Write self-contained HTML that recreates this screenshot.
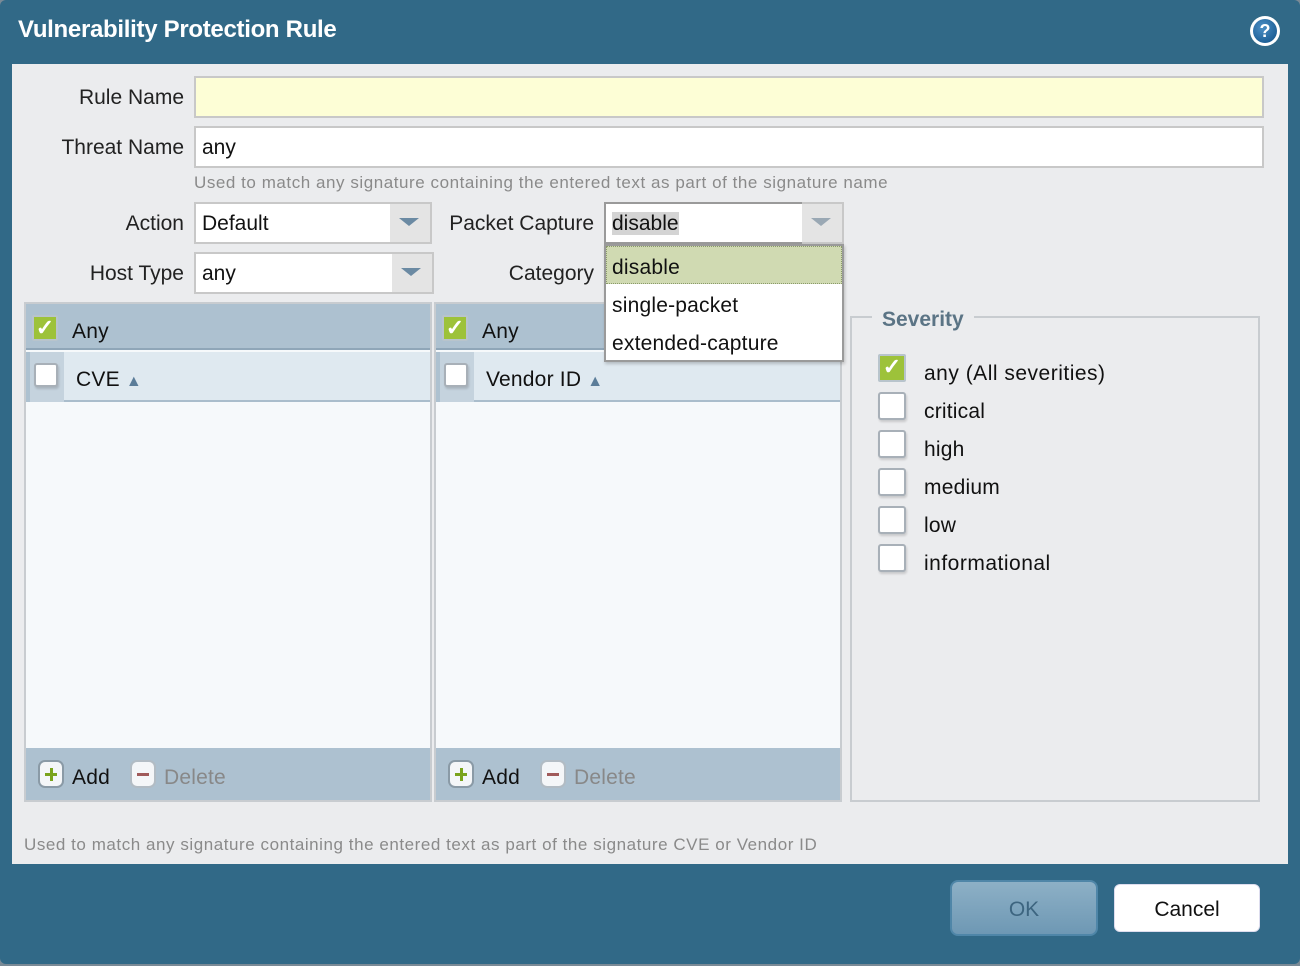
<!DOCTYPE html>
<html><head><style>
*{box-sizing:border-box;margin:0;padding:0}
body{width:1300px;height:966px;background:#7a8a96;font-family:"Liberation Sans",sans-serif;position:relative;overflow:hidden}
.a{position:absolute}
#frame{left:0;top:0;width:1300px;height:964px;background:#316987;border-radius:6px}
#title{left:18px;top:16px;color:#fff;font-weight:bold;font-size:24px;letter-spacing:-0.3px}
#panel{left:12px;top:64px;width:1276px;height:800px;background:#ebecee}
.lbl{font-size:21px;color:#222;text-align:right}
.inp{background:#fff;border:2px solid #c8c8c8;font-size:21px;color:#111;padding:8px 0 0 6px}
.dd{background:#e4e4e4;border:2px solid #c8c8c8;border-left:none}
.tri{width:0;height:0;border-left:10px solid transparent;border-right:10px solid transparent;border-top:8px solid #6b8aa3;position:absolute;left:9px;top:14px}
.help{font-size:17px;color:#8a8a8a;letter-spacing:0.55px}
.cb{width:26px;height:26px;border:2px solid #a8b0b8;border-radius:3px;background:#fff;box-shadow:1px 2px 2px rgba(0,0,0,.15)}
.cbg{width:26px;height:26px;background:#9dc23a;border:2px solid #b8c4cc;border-radius:2px;color:#fff;font-size:22px;font-weight:bold;line-height:22px;text-align:center}
.t{font-size:21px;color:#111;letter-spacing:0.2px}
.btnic{width:26px;height:28px;border:2px solid #8a9aa6;border-radius:7px;background:#f4f6f8}
</style></head><body>
<div id="frame" class="a"></div>
<div id="title" class="a">Vulnerability Protection Rule</div>
<div class="a" style="left:1250px;top:16px;width:30px;height:30px;border-radius:50%;background:#fff;"></div>
<div class="a" style="left:1253px;top:19px;width:24px;height:24px;border-radius:50%;background:radial-gradient(circle at 40% 35%,#4c8fc5,#0d4f86);color:#fff;font-weight:bold;font-size:18px;text-align:center;line-height:24px">?</div>
<div id="panel" class="a"></div>

<div class="a lbl" style="left:40px;top:86px;width:144px">Rule Name</div>
<div class="a inp" style="left:194px;top:76px;width:1070px;height:42px;background:#fdfed6"></div>
<div class="a lbl" style="left:40px;top:136px;width:144px">Threat Name</div>
<div class="a inp" style="left:194px;top:126px;width:1070px;height:42px">any</div>
<div class="a help" style="left:194px;top:173px">Used to match any signature containing the entered text as part of the signature name</div>

<div class="a lbl" style="left:40px;top:212px;width:144px">Action</div>
<div class="a inp" style="left:194px;top:202px;width:198px;height:42px">Default</div>
<div class="a dd" style="left:390px;top:202px;width:42px;height:42px"><div class="tri"></div></div>
<div class="a lbl" style="left:40px;top:262px;width:144px">Host Type</div>
<div class="a inp" style="left:194px;top:252px;width:200px;height:42px">any</div>
<div class="a dd" style="left:392px;top:252px;width:42px;height:42px"><div class="tri"></div></div>

<div class="a lbl" style="left:440px;top:212px;width:154px">Packet Capture</div>
<div class="a inp" style="left:604px;top:202px;width:200px;height:42px;border-color:#9a9a9a"><span style="background:#d4d4d4">disable</span></div>
<div class="a dd" style="left:802px;top:202px;width:42px;height:42px"><div class="tri" style="border-top-color:#9aa8b4"></div></div>
<div class="a lbl" style="left:440px;top:262px;width:154px">Category</div>

<!-- left grid -->
<div class="a" style="left:24px;top:302px;width:408px;height:500px;background:#f6f9fb;border:2px solid #c8ccd0"></div>
<div class="a" style="left:26px;top:304px;width:404px;height:46px;background:#adc1d0;border-bottom:2px solid #8fa6b8"></div>
<div class="a cbg" style="left:32px;top:315px">✓</div>
<div class="a t" style="left:72px;top:320px">Any</div>
<div class="a" style="left:26px;top:352px;width:404px;height:50px;background:#dfe9f0;border-bottom:2px solid #aabdcc"></div>
<div class="a" style="left:26px;top:352px;width:38px;height:50px;background:#c5d3de;border-left:4px solid #adc1d0"></div>
<div class="a cb" style="left:34px;top:363px;width:24px;height:24px"></div>
<div class="a t" style="left:76px;top:368px">CVE <span style="font-size:16px;color:#5b7d99">▲</span></div>
<div class="a" style="left:26px;top:748px;width:404px;height:52px;background:#adc1d0"></div>
<div class="a btnic" style="left:38px;top:760px"><div class="a" style="left:5px;top:11px;width:12px;height:3px;background:#7aa31c"></div><div class="a" style="left:9.5px;top:6px;width:3px;height:13px;background:#7aa31c"></div></div>
<div class="a t" style="left:72px;top:766px">Add</div>
<div class="a btnic" style="left:130px;top:760px;border-color:#b2bcc4"><div class="a" style="left:5px;top:11px;width:12px;height:3px;background:#a05a5a"></div></div>
<div class="a t" style="left:164px;top:766px;color:#888">Delete</div>

<!-- middle grid -->
<div class="a" style="left:434px;top:302px;width:408px;height:500px;background:#f6f9fb;border:2px solid #c8ccd0"></div>
<div class="a" style="left:436px;top:304px;width:404px;height:46px;background:#adc1d0;border-bottom:2px solid #8fa6b8"></div>
<div class="a cbg" style="left:442px;top:315px">✓</div>
<div class="a t" style="left:482px;top:320px">Any</div>
<div class="a" style="left:436px;top:352px;width:404px;height:50px;background:#dfe9f0;border-bottom:2px solid #aabdcc"></div>
<div class="a" style="left:436px;top:352px;width:38px;height:50px;background:#c5d3de;border-left:4px solid #adc1d0"></div>
<div class="a cb" style="left:444px;top:363px;width:24px;height:24px"></div>
<div class="a t" style="left:486px;top:368px">Vendor ID <span style="font-size:16px;color:#5b7d99">▲</span></div>
<div class="a" style="left:436px;top:748px;width:404px;height:52px;background:#adc1d0"></div>
<div class="a btnic" style="left:448px;top:760px"><div class="a" style="left:5px;top:11px;width:12px;height:3px;background:#7aa31c"></div><div class="a" style="left:9.5px;top:6px;width:3px;height:13px;background:#7aa31c"></div></div>
<div class="a t" style="left:482px;top:766px">Add</div>
<div class="a btnic" style="left:540px;top:760px;border-color:#b2bcc4"><div class="a" style="left:5px;top:11px;width:12px;height:3px;background:#a05a5a"></div></div>
<div class="a t" style="left:574px;top:766px;color:#888">Delete</div>

<!-- dropdown list -->
<div class="a" style="left:604px;top:244px;width:240px;height:118px;background:#fff;border:2px solid #9a9a9a;box-shadow:1px 2px 3px rgba(0,0,0,.2)"></div>
<div class="a" style="left:606px;top:246px;width:236px;height:38px;background:#d0dab2;border:1px dotted #8a9a6a"></div>
<div class="a t" style="left:612px;top:256px">disable</div>
<div class="a t" style="left:612px;top:294px">single-packet</div>
<div class="a t" style="left:612px;top:332px">extended-capture</div>

<!-- severity -->
<div class="a" style="left:850px;top:316px;width:410px;height:486px;border:2px solid #c8ccd0"></div>
<div class="a" style="left:872px;top:308px;padding:0 10px;background:#ebecee;font-size:21px;font-weight:bold;color:#5b7485">Severity</div>
<div class="a cbg" style="left:878px;top:354px;width:28px;height:28px">✓</div>
<div class="a t" style="left:924px;top:362px;letter-spacing:0.5px">any (All severities)</div>
<div class="a cb" style="left:878px;top:392px;width:28px;height:28px"></div><div class="a t" style="left:924px;top:400px">critical</div>
<div class="a cb" style="left:878px;top:430px;width:28px;height:28px"></div><div class="a t" style="left:924px;top:438px">high</div>
<div class="a cb" style="left:878px;top:468px;width:28px;height:28px"></div><div class="a t" style="left:924px;top:476px">medium</div>
<div class="a cb" style="left:878px;top:506px;width:28px;height:28px"></div><div class="a t" style="left:924px;top:514px">low</div>
<div class="a cb" style="left:878px;top:544px;width:28px;height:28px"></div><div class="a t" style="left:924px;top:552px;letter-spacing:0.5px">informational</div>

<div class="a help" style="left:24px;top:835px">Used to match any signature containing the entered text as part of the signature CVE or Vendor ID</div>

<!-- buttons -->
<div class="a" style="left:950px;top:880px;width:148px;height:56px;border-radius:8px;background:linear-gradient(#8db0c6,#6e98b4);border:2px solid #4f86a8;color:#3d6580;font-size:21px;text-align:center;line-height:56px">OK</div>
<div class="a" style="left:1114px;top:884px;width:146px;height:48px;border-radius:6px;background:#fff;border:1px solid #dde;color:#111;font-size:21px;text-align:center;line-height:50px">Cancel</div>
</body></html>
